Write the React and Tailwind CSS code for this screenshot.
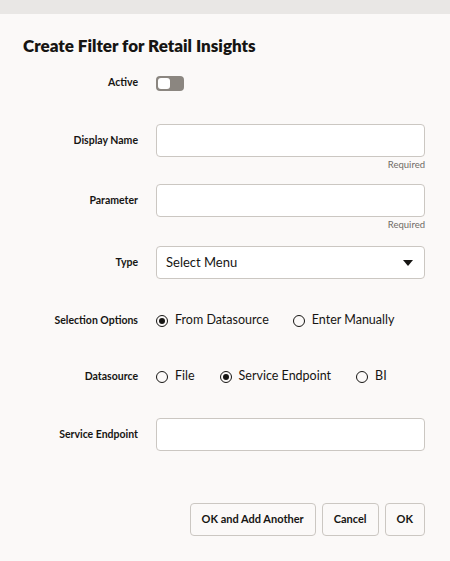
import React from "react";

const Radio = ({ checked, label }) => (
  <label className="flex items-center gap-[7px] whitespace-nowrap">
    <span className="w-[12px] h-[12px] rounded-full border border-[#161513] flex items-center justify-center shrink-0">
      {checked && <span className="w-[6px] h-[6px] rounded-full bg-[#161513]" />}
    </span>
    <span className="text-[12.5px] text-[#161513]">{label}</span>
  </label>
);

const Row = ({ label, children, h = "h-[33px]" }) => (
  <div className={`flex items-center ${h}`}>
    <div className="w-[115px] shrink-0 text-right text-[10.5px] font-bold text-[#161513] whitespace-nowrap">{label}</div>
    <div className="ml-[18px] flex-1 flex items-center h-full">{children}</div>
  </div>
);

const Input = () => (
  <div className="w-full h-[33px] bg-white border border-[#cbc7c2] rounded-[4px]" />
);

export default function App() {
  return (
    <div className="w-[450px] h-[561px] bg-[#fbf9f8] flex flex-col" style={{ fontFamily: "Lato, 'Noto Sans', sans-serif" }}>
      <div className="h-[14px] bg-[#e9e7e5]" />
      <div className="pl-[23px] pr-[25px] flex flex-col">
        <h1 className="mt-[20px] text-[17px] leading-[24px] font-extrabold text-[#161513]">Create Filter for Retail Insights</h1>
        <div className="mt-[17px]">
          <Row label="Active" h="h-[16px]">
            <div className="w-[28px] h-[15px] rounded-[4px] bg-[#8b8680] relative">
              <div className="absolute left-[2px] top-[2px] w-[12px] h-[11px] rounded-[3px] bg-white" />
            </div>
          </Row>
        </div>
        <div className="mt-[33px]">
          <Row label="Display Name"><Input /></Row>
          <div className="text-right text-[9.5px] text-[#6f6b66] mt-[2px] leading-[12px]">Required</div>
        </div>
        <div className="mt-[13px]">
          <Row label="Parameter"><Input /></Row>
          <div className="text-right text-[9.5px] text-[#6f6b66] mt-[2px] leading-[12px]">Required</div>
        </div>
        <div className="mt-[15px]">
          <Row label="Type">
            <div className="w-full h-[33px] bg-white border border-[#cbc7c2] rounded-[4px] flex items-center justify-between pl-[9px] pr-[11px]">
              <span className="text-[13px] text-[#161513]">Select Menu</span>
              <svg width="10" height="6" viewBox="0 0 10 6"><path d="M0 0h10L5 6z" fill="#161513" /></svg>
            </div>
          </Row>
        </div>
        <div className="mt-[25px]">
          <Row label="Selection Options">
            <div className="flex items-center gap-[24px]">
              <Radio checked label="From Datasource" />
              <Radio label="Enter Manually" />
            </div>
          </Row>
        </div>
        <div className="mt-[23px]">
          <Row label="Datasource">
            <div className="flex items-center gap-[25px]">
              <Radio label="File" />
              <Radio checked label="Service Endpoint" />
              <Radio label="BI" />
            </div>
          </Row>
        </div>
        <div className="mt-[25px]">
          <Row label="Service Endpoint"><Input /></Row>
        </div>
        <div className="mt-[52px] flex justify-end gap-[6px]">
          {["OK and Add Another", "Cancel", "OK"].map((t) => (
            <button key={t} className="h-[33px] px-[11px] border border-[#cbc7c2] rounded-[4px] bg-[#fbf9f8] text-[11px] font-bold text-[#161513]">{t}</button>
          ))}
        </div>
      </div>
    </div>
  );
}
